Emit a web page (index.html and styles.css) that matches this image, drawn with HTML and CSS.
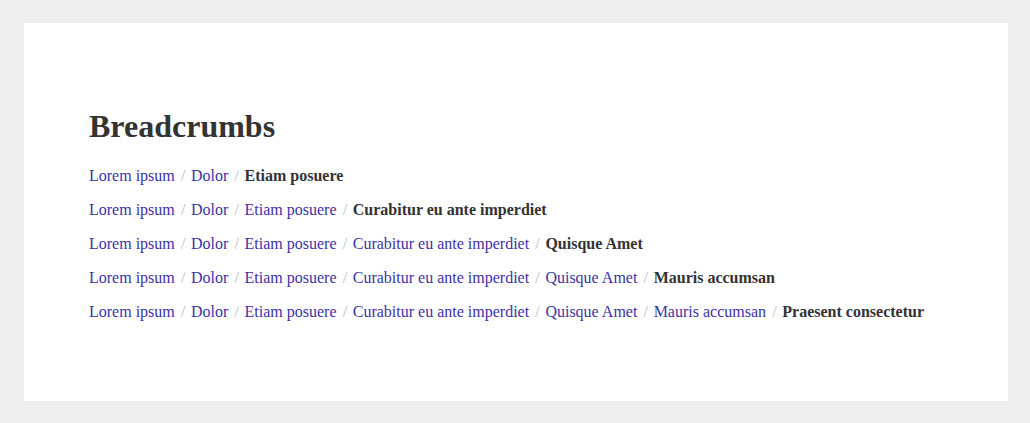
FILE: index.html
```html
<!DOCTYPE html>
<html lang="en">
<head>
<meta charset="utf-8">
<title>Breadcrumbs</title>
<link rel="stylesheet" href="styles.css">
</head>
<body>
<main class="panel">
  <h1 class="title">Breadcrumbs</h1>
  <div class="rows">
    <ol class="breadcrumb">
      <li><a href="#">Lorem ipsum</a></li>
      <li><a href="#">Dolor</a></li>
      <li class="active">Etiam posuere</li>
    </ol>
    <ol class="breadcrumb">
      <li><a href="#">Lorem ipsum</a></li>
      <li><a href="#">Dolor</a></li>
      <li><a href="#">Etiam posuere</a></li>
      <li class="active">Curabitur eu ante imperdiet</li>
    </ol>
    <ol class="breadcrumb">
      <li><a href="#">Lorem ipsum</a></li>
      <li><a href="#">Dolor</a></li>
      <li><a href="#">Etiam posuere</a></li>
      <li><a href="#">Curabitur eu ante imperdiet</a></li>
      <li class="active">Quisque Amet</li>
    </ol>
    <ol class="breadcrumb">
      <li><a href="#">Lorem ipsum</a></li>
      <li><a href="#">Dolor</a></li>
      <li><a href="#">Etiam posuere</a></li>
      <li><a href="#">Curabitur eu ante imperdiet</a></li>
      <li><a href="#">Quisque Amet</a></li>
      <li class="active">Mauris accumsan</li>
    </ol>
    <ol class="breadcrumb">
      <li><a href="#">Lorem ipsum</a></li>
      <li><a href="#">Dolor</a></li>
      <li><a href="#">Etiam posuere</a></li>
      <li><a href="#">Curabitur eu ante imperdiet</a></li>
      <li><a href="#">Quisque Amet</a></li>
      <li><a href="#">Mauris accumsan</a></li>
      <li class="active">Praesent consectetur</li>
    </ol>
  </div>
</main>
</body>
</html>
```

FILE: styles.css
```css
html, body {
  margin: 0;
  padding: 0;
}

body {
  background: #eeeeee;
  padding: 23px 22px 22px 24px;
  font-family: "Liberation Serif", "Times New Roman", serif;
  font-size: 16px;
  color: #333333;
}

.panel {
  background: #ffffff;
  padding: 64px 64px 64px 65px;
}

.title {
  margin: 21px 0 19px;
  font-size: 32px;
  line-height: 37px;
  font-weight: bold;
  color: #333333;
}

.rows {
  display: flex;
  flex-direction: column;
  gap: 10px;
  margin-bottom: 13px;
}

.breadcrumb {
  display: flex;
  list-style: none;
  margin: 0;
  padding: 0;
  line-height: 24px;
  white-space: nowrap;
}

.breadcrumb li + li::before {
  content: "/";
  padding: 0 5.6px 0 6.2px;
  color: #bbbbbb;
  font-weight: normal;
}

.breadcrumb a {
  color: #3d32a6;
  text-decoration: none;
}

.breadcrumb .active {
  font-weight: bold;
  color: #333333;
}
```
